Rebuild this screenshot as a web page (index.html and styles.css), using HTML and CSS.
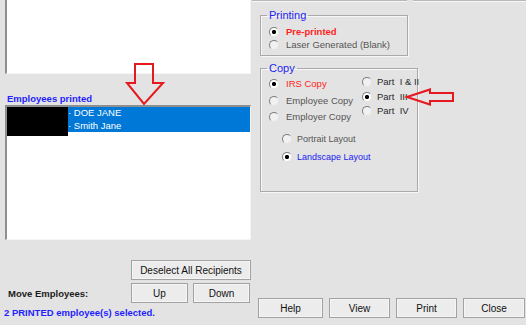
FILE: index.html
```html
<!DOCTYPE html>
<html>
<head>
<meta charset="utf-8">
<link rel="stylesheet" href="styles.css">
</head>
<body>
<div class="app">
  <div class="left">
    <div class="list list-top"></div>
    <div class="label">Employees printed</div>
    <div class="list list-main">
      <div class="item">· DOE JANE</div>
      <div class="item">· Smith Jane</div>
      <div class="mask"></div>
    </div>
    <button class="btn deselect">Deselect All Recipients</button>
    <div class="move-row">
      <span class="move-label">Move Employees:</span>
      <button class="btn small">Up</button>
      <button class="btn small down">Down</button>
    </div>
    <div class="status">2 PRINTED employee(s) selected.</div>
  </div>
  <div class="right">
    <div class="topedge"><span class="seg seg1"></span><span class="seg seg2"></span></div>
    <fieldset class="group printing">
      <legend>Printing</legend>
      <div class="opt prow"><span class="radio on"></span><span class="t red bold">Pre-printed</span></div>
      <div class="opt prow"><span class="radio"></span><span class="t gray">Laser Generated (Blank)</span></div>
    </fieldset>
    <fieldset class="group copy">
      <legend>Copy</legend>
      <div class="copygrid">
        <div class="col col-l">
          <div class="opt lrow"><span class="radio on"></span><span class="t red">IRS Copy</span></div>
          <div class="opt lrow"><span class="radio"></span><span class="t gray">Employee Copy</span></div>
          <div class="opt lrow"><span class="radio"></span><span class="t gray">Employer Copy</span></div>
        </div>
        <div class="col col-r">
          <div class="opt rrow"><span class="radio"></span><span class="t dark">Part&nbsp; I &amp; II</span></div>
          <div class="opt rrow"><span class="radio on"></span><span class="t dark">Part&nbsp; III</span></div>
          <div class="opt rrow"><span class="radio"></span><span class="t dark">Part&nbsp; IV</span></div>
        </div>
      </div>
      <div class="layouts">
        <div class="opt yrow"><span class="radio"></span><span class="t gray small-t">Portrait Layout</span></div>
        <div class="opt yrow"><span class="radio on"></span><span class="t blue small-t">Landscape Layout</span></div>
      </div>
    </fieldset>
    <div class="actions">
      <button class="btn">Help</button>
      <button class="btn">View</button>
      <button class="btn">Print</button>
      <button class="btn">Close</button>
    </div>
  </div>
  <svg class="arrows" width="526" height="325" viewBox="0 0 526 325">
    <path d="M135 64 H153 V83 H163 L144 104 L127 83 H135 Z" fill="none" stroke="#e5191e" stroke-width="2" stroke-linejoin="miter"/>
    <path d="M407 97 L430 89.5 V93 H453 V101 H430 V104.5 Z" fill="none" stroke="#e5191e" stroke-width="2" stroke-linejoin="miter"/>
  </svg>
</div>
</body>
</html>
```
FILE: styles.css
```css
* { box-sizing: border-box; }
html, body { margin: 0; padding: 0; }
body {
  background: #e3e3e3;
  font-family: "Liberation Sans", Arial, sans-serif;
  font-size: 9.5px;
  color: #222;
}
.app {
  position: relative;
  width: 526px;
  height: 325px;
  display: flex;
  overflow: hidden;
}
.left {
  width: 252px;
  flex: none;
  display: flex;
  flex-direction: column;
}
.list {
  margin-left: 5px;
  width: 246px;
  background: #fff;
  border-left: 2px solid #8f8f8f;
  border-right: 1px solid #f4f4f4;
  border-bottom: 1px solid #f4f4f4;
}
.list-top { height: 74px; }
.label {
  margin-top: 19px;
  padding-left: 7px;
  height: 12px;
  line-height: 12px;
  color: #1f1fff;
  font-weight: bold;
}
.list-main {
  position: relative;
  height: 135px;
  border-top: 2px solid #8f8f8f;
}
.item {
  height: 12.5px;
  line-height: 12.5px;
  background: #0078d7;
  color: #fff;
  padding-left: 61px;
  font-size: 9.5px;
}
.mask {
  position: absolute;
  left: 0;
  top: 0;
  width: 61px;
  height: 29px;
  background: #000;
}
.btn {
  height: 20px;
  margin: 0;
  padding: 0;
  background: #ececec;
  border: 1px solid #a2a2a2;
  box-shadow: inset 0 0 0 1px #f5f5f5;
  font-family: "Liberation Sans", Arial, sans-serif;
  font-size: 10px;
  color: #111;
}
.deselect {
  margin-top: 20px;
  margin-left: 131px;
  width: 120px;
}
.move-row {
  margin-top: 3px;
  height: 20px;
  display: flex;
  align-items: center;
}
.move-label {
  width: 131px;
  padding-left: 8px;
  font-weight: bold;
  color: #1c1c1c;
}
.btn.small { width: 57px; }
.btn.down { margin-left: 5px; }
.status {
  margin-top: 4px;
  padding-left: 4px;
  line-height: 12px;
  color: #1f1fff;
  font-weight: bold;
}

.right {
  flex: 1;
  display: flex;
  flex-direction: column;
  padding-bottom: 7px;
}
.topedge {
  display: flex;
  height: 2px;
}
.seg {
  height: 2px;
  border-top: 1px solid #b8b8b8;
  border-bottom: 1px solid #f6f6f6;
}
.seg1 { width: 155px; }
.seg2 { margin-left: 6px; flex: 1; }

.group {
  margin: 0 0 0 8px;
  border: 1px solid #a9a9a9;
  box-shadow: 1px 1px 0 #f7f7f7, inset 1px 1px 0 #f7f7f7;
  min-width: 0;
}
.group legend {
  padding: 0 2px;
  line-height: 12px;
  font-size: 11px;
  color: #2323f0;
}
.printing {
  margin-top: 7px;
  width: 148px;
  padding: 4px 0 4px 6px;
}
.copy {
  margin-top: 6px;
  width: 158px;
  padding: 1px 0 25px 6px;
}
.opt {
  display: flex;
  align-items: center;
  white-space: nowrap;
}
.prow { height: 13px; padding-left: 2px; }
.prow .t { margin-left: 7px; }
.copygrid {
  display: grid;
  grid-template-columns: 95px auto;
}
.col-l { padding-top: 1px; }
.lrow { height: 16.5px; padding-left: 2px; }
.lrow .t { margin-left: 7px; }
.rrow { height: 14.5px; }
.rrow .t { margin-left: 5px; }
.layouts { margin-top: 4.5px; padding-left: 15px; }
.yrow { height: 18px; }
.yrow .t { margin-left: 5px; }

.radio {
  flex: none;
  width: 10px;
  height: 10px;
  border-radius: 50%;
  border: 1px solid;
  border-color: #7e7e7e #e4e4e4 #e4e4e4 #7e7e7e;
  background: #f1f1f1;
}
.radio.on {
  background: radial-gradient(circle, #000 0 1.8px, #fff 2.4px);
}
.t { line-height: 12px; }
.red { color: #ff1e1e; }
.bold { font-weight: bold; }
.gray { color: #555; }
.dark { color: #2b2b2b; }
.blue { color: #2020f0; }
.small-t { font-size: 9px; }

.actions {
  margin-top: auto;
  margin-left: 6px;
  display: grid;
  grid-template-columns: 65px 61px 61px 62px;
  column-gap: 6px;
}

.arrows {
  position: absolute;
  left: 0;
  top: 0;
  pointer-events: none;
}
```
